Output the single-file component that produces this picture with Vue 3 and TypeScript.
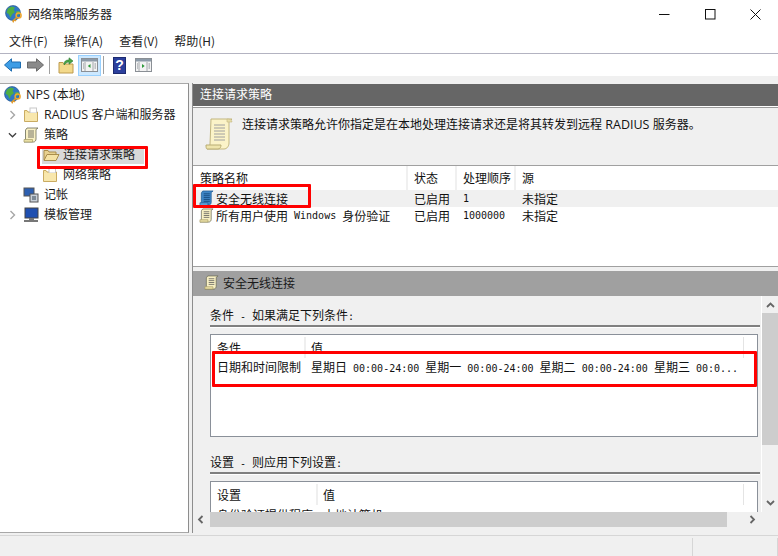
<script setup lang="ts">
const menus: string[] = ['文件(F)', '操作(A)', '查看(V)', '帮助(H)']
</script>

<template>
  <div class="win">
    <svg class="defs" width="0" height="0" aria-hidden="true">
      <defs>
        <symbol id="globe" viewBox="0 0 18 18">
          <circle cx="8" cy="8" r="7.5" fill="#2f78c4" stroke="#1d4d86" stroke-width=".6" />
          <path d="M3 3.500 6.500 1.500 10 2.500 8.500 5 10 7 7 9.500 5.500 13 4 9.500 1.500 7.500Z" fill="#4fae42" />
          <path d="M11 6.500 14.500 6 15 9 12 10Z" fill="#63b34c" />
          <circle cx="13.600" cy="10.400" r="2.500" fill="none" stroke="#f0a830" stroke-width="1.500" />
          <path d="M11.800 12.200 7.500 16.500M9.500 14.500l1.500 1.500M7.800 16.200l1 1" stroke="#e49a28" stroke-width="1.500" fill="none" />
        </symbol>
        <symbol id="folder" viewBox="0 0 16 16">
          <path d="M1.500 3.500H4L5 5h9.500v9.500h-13Z" fill="#f6e3a0" stroke="#c9ab62" />
          <rect x="7" y="1" width="6.500" height="5" fill="#fff" stroke="#c8c8c8" />
          <rect x="2" y="6" width="12" height="8" fill="#f8e7ad" />
        </symbol>
        <symbol id="folderOpen" viewBox="0 0 18 16">
          <path d="M2 13V3.500h4L7 5h7v3" fill="#e8d18f" stroke="#a98d4c" />
          <path d="M2 13.500 5 7.500h12l-3 6Z" fill="#f5e2a4" stroke="#a98d4c" />
        </symbol>
        <symbol id="scroll" viewBox="0 0 28 32">
          <path d="M6 1h21l-3 3v21c0 3-2 6-5 6H2c2-1 3-3 3-5Z" fill="#fbf3c8" stroke="#c2b67e" />
          <path d="M22 1c3 0 5 1 5 3h-5Z" fill="#e8dfa8" stroke="#c2b67e" stroke-width=".6" />
          <path d="M9 7h11M9 10h11M9 13h11M9 16h11M9 19h11M9 22h11" stroke="#a0a0a0" />
          <path d="M1 27h15c0 2-1 4-3 4H2c-1 0-1-3-1-4Z" fill="#efe5ac" stroke="#b9ad74" />
        </symbol>
        <symbol id="scrollS" viewBox="0 0 16 16">
          <path d="M4 1h11l-2 1.500V12c0 1.500-1 3-2.500 3H1c1-.5 1.500-1.500 1.500-2.500V3Z" fill="#f8f0c4" stroke="#6b6b55" stroke-width=".8" />
          <path d="M5 4h6M5 6h6M5 8h6M5 10h6" stroke="#555" stroke-width=".8" />
          <path d="M1 12.500h8.500V15H1Z" fill="#e9dfa6" stroke="#a89d66" stroke-width=".7" />
        </symbol>
        <symbol id="scrollB" viewBox="0 0 16 18">
          <path d="M4 1h11l-2 1.500V13c0 1.500-1 3-2.500 3H1c1-.5 1.500-1.500 1.500-2.500V3Z" fill="#3f86c6" stroke="#1e5c96" stroke-width=".8" />
          <path d="M5 4h6.500M5 6h6.500M5 8h6.500M5 10h6.500M5 12h6.500" stroke="#0f3f70" stroke-width=".8" />
          <path d="M1 13.500h8.500V17H1Z" fill="#5d9fd8" stroke="#1e5c96" stroke-width=".7" />
        </symbol>
        <symbol id="pane" viewBox="0 0 17 14">
          <rect x=".5" y=".5" width="16" height="13" fill="#f3f3f3" stroke="#8a8f95" />
          <rect x="1" y="1" width="15" height="2.500" fill="#8c9aa8" />
          <path d="M4 4v9M12 4v9" stroke="#a4a8ac" />
          <path d="M2 6h1M2 8h1M2 10h1M13.500 6h1.500M13.500 8h1.500M13.500 10h1.500" stroke="#8a8f95" />
        </symbol>
      </defs>
    </svg>

    <header class="titlebar">
      <svg class="ico-title"><use href="#globe" /></svg>
      <span class="title-text">网络策略服务器</span>
      <div class="winbtns">
        <svg width="11" height="11" viewBox="0 0 11 11"><path d="M0 5.500h10.500" stroke="#111" /></svg>
        <svg width="11" height="11" viewBox="0 0 11 11"><rect x=".5" y=".5" width="9.500" height="9.500" fill="none" stroke="#111" /></svg>
        <svg width="11" height="11" viewBox="0 0 11 11"><path d="M.5.500l10 10M10.500.500l-10 10" stroke="#111" /></svg>
      </div>
    </header>

    <nav class="menubar">
      <span v-for="m in menus" :key="m" class="menu-item">{{ m }}</span>
    </nav>

    <div class="toolbar">
      <svg class="tb-arrow" viewBox="0 0 17 14"><path d="M.5 7 7.500.8V4H16.500V10H7.500V13.200Z" fill="#3d9de6" stroke="#1e6db0" /></svg>
      <svg class="tb-arrow tb-fwd" viewBox="0 0 17 14"><path d="M16.500 7 9.500.8V4H.5V10H9.500V13.200Z" fill="#8a8a8a" stroke="#6a6a6a" /></svg>
      <span class="tb-sep"></span>
      <svg class="tb-up" viewBox="0 0 16 17"><path d="M1 5.500h4l1 1.500h9v9H1Z" fill="#f3d98b" stroke="#bd9a4c" /><path d="M6 8C6 4 8 3 11 3V.8L15 4l-4 3.200V5C9 5 8 6 6 8Z" fill="#4aa545" stroke="#2d7a33" stroke-width=".6" /></svg>
      <span class="tb-active">
        <svg class="tb-pane" viewBox="0 0 17 14"><use href="#pane" /><path d="M9.500 6v4L6.800 8Z" fill="#2e9a3a" /></svg>
      </span>
      <span class="tb-sep tb-sep2"></span>
      <span class="tb-help">?</span>
      <svg class="tb-pane tb-pane2" viewBox="0 0 17 14"><use href="#pane" /><path d="M7 6v4l2.700-2Z" fill="#2e9a3a" /></svg>
    </div>

    <div class="workspace">
      <aside class="tree">
        <div class="t-row t-root"><svg class="i18"><use href="#globe" /></svg><span class="sans"><span class="lat">NPS (</span>本地<span class="lat">)</span></span></div>
        <div class="t-row t-l1">
          <svg class="chev" viewBox="0 0 8 10"><path d="M2 1l4 4-4 4" fill="none" stroke="#a6a6a6" stroke-width="1.400" /></svg>
          <svg class="i16"><use href="#folder" /></svg><span class="sans"><span class="lat">RADIUS </span>客户端和服务器</span>
        </div>
        <div class="t-row t-l1">
          <svg class="chev" viewBox="0 0 10 8"><path d="M1 2l4 4 4-4" fill="none" stroke="#404040" stroke-width="1.400" /></svg>
          <svg class="i16"><use href="#scrollS" /></svg><span class="sans">策略</span>
        </div>
        <div class="t-row t-l2">
          <span class="t-sel"><svg class="i18b"><use href="#folderOpen" /></svg><span class="sans">连接请求策略</span></span>
        </div>
        <div class="t-row t-l2">
          <span class="t-plain"><svg class="i16"><use href="#folder" /></svg><span class="sans">网络策略</span></span>
        </div>
        <div class="t-row t-l1">
          <span class="chev"></span>
          <svg class="i16" viewBox="0 0 16 16"><rect x="1" y="1" width="10" height="8" fill="#2d5fb0" stroke="#555" /><rect x="7" y="7" width="8" height="8" fill="#c9d0d8" stroke="#555" /><path d="M9 10h4M9 12h4" stroke="#345" /></svg><span class="sans">记帐</span>
        </div>
        <div class="t-row t-l1">
          <svg class="chev" viewBox="0 0 8 10"><path d="M2 1l4 4-4 4" fill="none" stroke="#a6a6a6" stroke-width="1.400" /></svg>
          <svg class="i16" viewBox="0 0 16 16"><rect x="2" y="1" width="13" height="10" fill="#1f4fb0" stroke="#444" /><path d="M6 11h5v2H6ZM1 13h14v2H1Z" fill="#777" /></svg><span class="sans">模板管理</span>
        </div>
      </aside>

      <main class="right">
        <div class="r-head sans">连接请求策略</div>
        <div class="r-body">
          <section class="desc">
            <svg class="desc-icon"><use href="#scroll" /></svg>
            <p class="desc-text sans">连接请求策略允许你指定是在本地处理连接请求还是将其转发到远程<span class="lat"> RADIUS </span>服务器。</p>
          </section>

          <section class="list">
            <div class="l-row l-head">
              <span class="c1">策略名称</span><span class="c2">状态</span><span class="c3">处理顺序</span><span class="c4">源</span>
            </div>
            <div class="l-row l-item l-hl">
              <span class="c1"><svg class="i-row"><use href="#scrollB" /></svg>安全无线连接</span><span class="c2">已启用</span><span class="c3 mono">1</span><span class="c4">未指定</span>
            </div>
            <div class="l-row l-item">
              <span class="c1"><svg class="i-row"><use href="#scrollS" /></svg>所有用户使用<span class="mono pre"> Windows </span>身份验证</span><span class="c2">已启用</span><span class="c3 mono">1000000</span><span class="c4">未指定</span>
            </div>
          </section>

          <section class="detail">
            <div class="d-head"><svg class="i-dhead"><use href="#scrollS" /></svg><span>安全无线连接</span></div>
            <div class="d-scrollarea">
              <div class="d-content">
                <h3 class="sec-title">条件<span class="mono pre"> - </span>如果满足下列条件<span class="mono">:</span></h3>
                <div class="box box-cond">
                  <div class="b-row b-head b-cond"><span class="b-c1">条件</span><span class="b-c2">值</span><span class="b-end"></span></div>
                  <div class="b-row b-cond b-val">
                    <span class="b-c1">日期和时间限制</span>
                    <span class="b-c2 nowrap">星期日<span class="mono pre"> 00:00-24:00 </span>星期一<span class="mono pre"> 00:00-24:00 </span>星期二<span class="mono pre"> 00:00-24:00 </span>星期三<span class="mono pre"> 00:0...</span></span>
                  </div>
                </div>
                <h3 class="sec-title sec-2">设置<span class="mono pre"> - </span>则应用下列设置<span class="mono">:</span></h3>
                <div class="box box-set">
                  <div class="b-row b-head b-set"><span class="b-c1">设置</span><span class="b-c2">值</span><span class="b-end"></span></div>
                  <div class="b-row b-set b-val2"><span class="b-c1">身份验证提供程序</span><span class="b-c2">本地计算机</span></div>
                </div>
              </div>
              <div class="vbar">
                <svg class="sb-arrow" viewBox="0 0 9 6"><path d="M1 5 4.500 1.500 8 5" fill="none" stroke="#666" stroke-width="1.800" /></svg>
                <div class="vthumb"></div>
                <svg class="sb-arrow sb-down" viewBox="0 0 9 6"><path d="M1 1 4.500 4.500 8 1" fill="none" stroke="#666" stroke-width="1.800" /></svg>
              </div>
            </div>
            <div class="hbar">
              <svg class="sb-h" viewBox="0 0 6 9"><path d="M5 1 1.500 4.500 5 8" fill="none" stroke="#666" stroke-width="1.800" /></svg>
              <div class="hthumb"></div>
              <svg class="sb-h sb-right" viewBox="0 0 6 9"><path d="M1 1 4.500 4.500 1 8" fill="none" stroke="#666" stroke-width="1.800" /></svg>
            </div>
          </section>
        </div>
      </main>
    </div>

    <footer class="status"><span class="s-cell"></span><span class="s-end"></span></footer>

    <div class="mark m1"></div>
    <div class="mark m2"></div>
    <div class="mark m3"></div>
  </div>
</template>

<style scoped>
.win {
  position: relative;
  width: 778px;
  height: 556px;
  overflow: hidden;
  display: flex;
  flex-direction: column;
  background: #f0f0f0;
  color: #111;
  font: 12px/16px "Noto Sans CJK SC", sans-serif;
}
.defs { position: absolute; }
.sans { font-family: "Open Sans", "Noto Sans CJK SC", sans-serif; }
.lat { font-size: 12.500px; white-space: pre; }
.mono { font: 10px/16px "DejaVu Sans Mono", monospace; }
.pre { white-space: pre; }
.nowrap { white-space: nowrap; }

.titlebar {
  height: 28px;
  background: #fff;
  display: flex;
  align-items: center;
  padding-left: 5px;
}
.ico-title { width: 18px; height: 18px; }
.title-text { margin-left: 5px; color: #222; }
.winbtns {
  margin-left: auto;
  display: flex;
  gap: 34.500px;
  padding-right: 17px;
}
.menubar {
  height: 25px;
  background: #fff;
  display: flex;
  align-items: center;
  padding-left: 9px;
  gap: 16px;
  border-bottom: 1px solid #b3b3c1;
  box-sizing: content-box;
}
.menu-item { white-space: nowrap; color: #222; }
.toolbar {
  height: 22px;
  background: #fff;
  display: flex;
  align-items: center;
  padding-left: 4px;
}
.tb-arrow { width: 17px; height: 14px; }
.tb-fwd { margin-left: 6px; }
.tb-sep { width: 1px; height: 18px; background: #a0a0a0; margin-left: 5px; }
.tb-up { width: 16px; height: 17px; margin-left: 8px; }
.tb-active {
  width: 23px;
  height: 21px;
  margin-left: 4px;
  box-sizing: border-box;
  background: #cce8ff;
  border: 1px solid #99d1ff;
  display: flex;
  align-items: center;
  justify-content: center;
}
.tb-pane { width: 17px; height: 14px; }
.tb-sep2 { margin-left: 2px; }
.tb-help {
  width: 13px;
  height: 17px;
  margin-left: 9px;
  background: #2b3f9c;
  border: 1px solid #1c2a70;
  box-sizing: border-box;
  color: #fff;
  font: bold 14px/15px "Liberation Sans", sans-serif;
  text-align: center;
}
.tb-pane2 { margin-left: 9px; }

.workspace {
  height: 450px;
  margin-top: 7px;
  display: flex;
}
.tree {
  width: 189px;
  flex: none;
  box-sizing: border-box;
  background: #fff;
  border-right: 1px solid #8d8d8d;
  border-top: 1px solid #a8a8a8;
  border-bottom: 1px solid #a8a8a8;
  padding-top: 1px;
  color: #1c1c1c;
}
.t-row {
  height: 20px;
  display: flex;
  align-items: center;
  white-space: nowrap;
}
.t-root { padding-left: 4px; gap: 4px; }
.t-root .i18 { width: 18px; height: 18px; }
.t-l1 { padding-left: 8px; }
.chev { width: 9px; height: 10px; margin-right: 6px; flex: none; }
.i16 { width: 16px; height: 16px; flex: none; margin-right: 5px; }
.t-l2 { padding-left: 42px; }
.t-sel {
  display: flex;
  align-items: center;
  width: 102px;
  height: 18px;
  background: #d9d9d9;
}
.i18b { width: 18px; height: 16px; margin-right: 3px; flex: none; }
.t-plain { display: flex; align-items: center; }

.right {
  flex: 1;
  margin-left: 3px;
  display: flex;
  flex-direction: column;
  min-width: 0;
  border-left: 1px solid #8d8d8d;
}
.r-head {
  height: 22px;
  margin-top: 1px;
  background: #666;
  color: #fff;
  line-height: 21px;
  padding-left: 7px;
  flex: none;
}
.r-body {
  flex: 1;
  display: flex;
  flex-direction: column;
  border-top: 1px solid #fff;
  min-height: 0;
}
.desc {
  height: 58px;
  border-top: 1px solid #9a9a9a;
  display: flex;
  align-items: flex-start;
  box-sizing: border-box;
  background: #f0f0f0;
  flex: none;
}
.desc-icon { width: 28px; height: 32px; margin: 10px 0 0 12px; flex: none; }
.desc-text { margin: 9px 0 0 9px; font-size: 12px; white-space: nowrap; }

.list {
  height: 102px;
  background: #fff;
  border-top: 1px solid #a0a0a0;
  border-bottom: 1px solid #a0a0a0;
  box-sizing: border-box;
  flex: none;
}
.l-row {
  display: grid;
  grid-template-columns: 215px 49px 59px 1fr;
  white-space: nowrap;
}
.l-head { height: 24px; }
.l-head span { line-height: 24px; border-right: 2px solid #f0f0f0; padding-left: 6px; }
.l-head .c1 { padding-left: 7px; }
.l-head .c4 { border-right: 0; }
.l-item { height: 17px; line-height: 17px; }
.l-item > span { padding-left: 6px; }
.l-item .c1 { display: flex; align-items: center; }
.l-item .mono { line-height: 17px; }
.l-hl { background: #f0f0f0; }
.i-row { width: 15px; height: 17px; margin-right: 2px; flex: none; }

.detail {
  flex: 1;
  margin-top: 4px;
  display: flex;
  flex-direction: column;
  min-height: 0;
}
.d-head {
  height: 25px;
  flex: none;
  background: #a0a0a0;
  display: flex;
  align-items: center;
  padding: 0 0 2px 11px;
  box-sizing: border-box;
  color: #1a1a1a;
}
.i-dhead { width: 15px; height: 15px; margin-right: 4px; }
.d-scrollarea {
  height: 216px;
  flex: none;
  display: flex;
  overflow: hidden;
}
.d-content {
  flex: 1;
  min-width: 0;
  padding: 11px 0 0 17px;
  overflow: hidden;
}
.sec-title {
  margin: 0;
  font-weight: 400;
  font-size: 12px;
  line-height: 16px;
  height: 18px;
  border-bottom: 2px solid #808080;
  box-shadow: 0 1px 0 #fff;
  width: 550px;
}
.sec-2 { margin-top: 17px; }
.box {
  width: 548px;
  margin-top: 7px;
  background: #fff;
  border: 1px solid #8a9099;
  box-sizing: border-box;
}
.box-cond { height: 103px; }
.box-set { height: 120px; }
.b-row { display: grid; position: relative; white-space: nowrap; }
.b-cond { grid-template-columns: 95px 1fr; }
.b-set { grid-template-columns: 107px 1fr; }
.b-head { height: 23px; }
.b-head .b-c1, .b-head .b-c2 { margin-top: 2px; height: 21px; line-height: 21px; }
.b-head .b-c1 { padding-left: 6px; border-right: 2px solid #efefef; }
.b-head .b-c2 { padding-left: 5px; }
.b-end { position: absolute; left: 532px; top: 2px; width: 1px; height: 21px; background: #e4e4e4; }
.b-val { height: 17px; line-height: 17px; }
.b-val .mono { line-height: 17px; }
.b-val .b-c1, .b-val2 .b-c1 { padding-left: 6px; }
.b-val .b-c2, .b-val2 .b-c2 { padding-left: 5px; }
.b-val2 { line-height: 20px; }

.vbar {
  width: 17px;
  flex: none;
  display: flex;
  flex-direction: column;
  align-items: center;
  background: #f0f0f0;
  border-left: 1px solid #fff;
  box-sizing: border-box;
}
.sb-arrow { width: 9px; height: 6px; margin-top: 6px; flex: none; }
.vthumb { width: 100%; height: 132px; background: #cdcdcd; margin-top: 5px; flex: none; }
.sb-down { margin-top: 55px; }
.hbar {
  height: 15px;
  flex: none;
  display: flex;
  align-items: center;
  background: #f0f0f0;
  padding-left: 4px;
}
.sb-h { width: 7px; height: 9px; flex: none; }
.hthumb { width: 517px; height: 15px; background: #cdcdcd; margin-left: 6px; flex: none; }
.sb-right { margin-left: 22px; }

.status {
  flex: 1;
  background: #f0f0f0;
  border-top: 1px solid #d6d6d6;
  margin-top: 2px;
  display: flex;
}
.s-cell { width: 692px; border-right: 1px solid #d6d6d6; margin-top: 2px; }
.s-end { width: 84px; border-right: 1px solid #d6d6d6; margin-top: 2px; }

.mark {
  position: absolute;
  border: 3px solid #ff0000;
  box-sizing: border-box;
  border-radius: 1px;
  pointer-events: none;
}
.m1 { left: 37px; top: 146px; width: 111px; height: 23px; }
.m2 { left: 193px; top: 184px; width: 118px; height: 24px; }
.m3 { left: 212px; top: 351px; width: 545px; height: 36px; }
</style>
